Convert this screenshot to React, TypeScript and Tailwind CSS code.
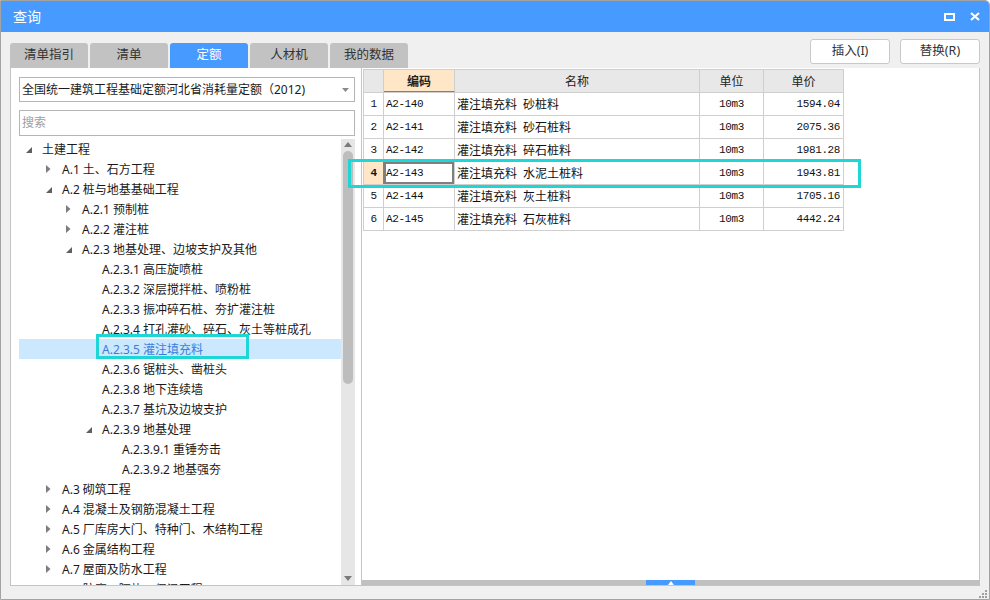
import React from 'react';

type Node = { l: number; t: string; e?: 'open' | 'closed'; sel?: boolean };

const tree: Node[] = [
  { l: 0, t: '土建工程', e: 'open' },
  { l: 1, t: 'A.1 土、石方工程', e: 'closed' },
  { l: 1, t: 'A.2 桩与地基基础工程', e: 'open' },
  { l: 2, t: 'A.2.1 预制桩', e: 'closed' },
  { l: 2, t: 'A.2.2 灌注桩', e: 'closed' },
  { l: 2, t: 'A.2.3 地基处理、边坡支护及其他', e: 'open' },
  { l: 3, t: 'A.2.3.1 高压旋喷桩' },
  { l: 3, t: 'A.2.3.2 深层搅拌桩、喷粉桩' },
  { l: 3, t: 'A.2.3.3 振冲碎石桩、夯扩灌注桩' },
  { l: 3, t: 'A.2.3.4 打孔灌砂、碎石、灰土等桩成孔' },
  { l: 3, t: 'A.2.3.5 灌注填充料', sel: true },
  { l: 3, t: 'A.2.3.6 锯桩头、凿桩头' },
  { l: 3, t: 'A.2.3.8 地下连续墙' },
  { l: 3, t: 'A.2.3.7 基坑及边坡支护' },
  { l: 3, t: 'A.2.3.9 地基处理', e: 'open' },
  { l: 4, t: 'A.2.3.9.1 重锤夯击' },
  { l: 4, t: 'A.2.3.9.2 地基强夯' },
  { l: 1, t: 'A.3 砌筑工程', e: 'closed' },
  { l: 1, t: 'A.4 混凝土及钢筋混凝土工程', e: 'closed' },
  { l: 1, t: 'A.5 厂库房大门、特种门、木结构工程', e: 'closed' },
  { l: 1, t: 'A.6 金属结构工程', e: 'closed' },
  { l: 1, t: 'A.7 屋面及防水工程', e: 'closed' },
  { l: 1, t: 'A.8 防腐、隔热、保温工程', e: 'closed' },
];

const indent = ['pl-[7px]', 'pl-[27px]', 'pl-[47px]', 'pl-[67px]', 'pl-[87px]'];

const rows = [
  ['1', 'A2-140', '灌注填充料', '砂桩料', '10m3', '1594.04'],
  ['2', 'A2-141', '灌注填充料', '砂石桩料', '10m3', '2075.36'],
  ['3', 'A2-142', '灌注填充料', '碎石桩料', '10m3', '1981.28'],
  ['4', 'A2-143', '灌注填充料', '水泥土桩料', '10m3', '1943.81'],
  ['5', 'A2-144', '灌注填充料', '灰土桩料', '10m3', '1705.16'],
  ['6', 'A2-145', '灌注填充料', '石灰桩料', '10m3', '4442.24'],
];

const tabs = ['清单指引', '清单', '定额', '人材机', '我的数据'];

const mono = "font-['Liberation_Mono','Noto_Sans_CJK_SC',monospace] text-[11px] tracking-[-0.4px]";
const cjk = "font-['Noto_Sans_CJK_SC',sans-serif] text-[12px]";

function Toggle({ e }: { e?: 'open' | 'closed' }) {
  if (e === 'open') {
    return (
      <svg width="6" height="6" viewBox="0 0 6 6" className="mt-[2px]">
        <polygon points="6,0 6,6 0,6" fill="#606060" />
      </svg>
    );
  }
  if (e === 'closed') {
    return (
      <svg width="5" height="8" viewBox="0 0 5 8">
        <polygon points="0,0 4.5,4 0,8" fill="#7d7d7d" />
      </svg>
    );
  }
  return null;
}

function TreeRow({ n }: { n: Node }) {
  return (
    <div
      className={`flex h-[20px] items-center ${indent[n.l]} ${n.sel ? 'bg-[#cce8ff] text-[#3a7ddc]' : 'text-[#1a1a1a]'}`}
    >
      <div className="flex w-[16px] shrink-0 items-center">
        <Toggle e={n.e} />
      </div>
      <span className="whitespace-nowrap pt-[1px] leading-[20px]">{n.t}</span>
    </div>
  );
}

export default function App() {
  return (
    <div className="flex h-[600px] w-[990px] flex-col overflow-hidden rounded-tr-[5px] border border-[#a3a3a3] bg-[#f0f0f0] font-['Noto_Sans','Noto_Sans_CJK_SC',sans-serif] text-[12px]">
      {/* title bar */}
      <div className="flex h-[31px] shrink-0 items-center justify-between bg-[#479aff] pl-[12px] pr-[9px] text-white">
        <span className="text-[14px]">查询</span>
        <div className="flex items-center gap-[15px]">
          <div className="h-[8px] w-[11px] border-2 border-white" />
          <svg width="10" height="9" viewBox="0 0 10 9">
            <path d="M1 1 L9 8 M9 1 L1 8" stroke="white" strokeWidth="2.2" />
          </svg>
        </div>
      </div>

      <div className="flex flex-1 flex-col px-[9px]">
        {/* tabs + buttons */}
        <div className="flex h-[36px] shrink-0 items-start justify-between">
          <div className="mt-[11px] flex gap-[2px]">
            {tabs.map((t) => (
              <div
                key={t}
                className={`flex h-[25px] w-[78px] items-center justify-center rounded-t-[3px] text-[12.5px] ${t === '定额' ? 'bg-[#479aff] text-white' : 'bg-[#c2c2c2] text-[#333]'}`}
              >
                {t}
              </div>
            ))}
          </div>
          <div className="mt-[7px] flex gap-[10px]">
            {['插入(I)', '替换(R)'].map((b) => (
              <button
                key={b}
                className="flex h-[25px] w-[80px] items-center justify-center rounded-[3px] border border-[#c9c9c9] bg-white text-[12.5px] text-[#333]"
              >
                {b}
              </button>
            ))}
          </div>
        </div>

        {/* main */}
        <div className="relative flex h-[518px] shrink-0">
          {/* left panel */}
          <div className="flex w-[352px] shrink-0 flex-col border-x border-b border-[#c4c4c4] bg-white pl-[8px] pr-[6px] pt-[9px]">
            <div className="flex h-[25px] items-center justify-between border border-[#b5b5b5] pl-[2px] pr-[5px] text-[#1a1a1a]">
              <span className="whitespace-nowrap">全国统一建筑工程基础定额河北省消耗量定额（2012)</span>
              <svg width="7" height="4" viewBox="0 0 7 4">
                <polygon points="0,0 7,0 3.5,4" fill="#8a8a8a" />
              </svg>
            </div>
            <div className="mt-[8px] flex h-[26px] items-center border border-[#b5b5b5] pl-[2px] text-[#a0a0a0]">
              搜索
            </div>
            <div className="mt-[3px] flex min-h-0 flex-1 overflow-hidden">
              <div className="flex-1 overflow-hidden">
                {tree.map((n) => (
                  <TreeRow key={n.t} n={n} />
                ))}
              </div>
              <div className="flex w-[14px] shrink-0 flex-col items-center bg-[#e6e6e6]">
                <svg width="8" height="5" viewBox="0 0 8 5" className="mt-[3px]">
                  <polygon points="0,5 8,5 4,0" fill="#7a7a7a" />
                </svg>
                <div className="mt-[4px] h-[233px] w-[10px] rounded-full bg-[#bdbdbd]" />
                <div className="flex-1" />
                <svg width="8" height="5" viewBox="0 0 8 5" className="mb-[4px]">
                  <polygon points="0,0 8,0 4,5" fill="#7a7a7a" />
                </svg>
              </div>
            </div>
          </div>

          {/* right panel */}
          <div className="flex flex-1 flex-col border-b border-r border-[#c4c4c4] bg-white">
            <div className="ml-[1px] mt-[1px] w-[481px] border-l border-t border-[#cfcfcf]">
              <div className="flex h-[23px] border-b border-[#cfcfcf] bg-[#e8e8e8] text-[#222]">
                <div className="w-[20px] border-r border-[#cfcfcf]" />
                <div className="flex w-[71px] items-center justify-center border-b border-r border-b-[#3d8ee8] border-r-[#cfcfcf] bg-[#fee6c6] font-bold">
                  <span className={cjk}>编码</span>
                </div>
                <div className={`flex w-[245px] items-center justify-center border-r border-[#cfcfcf] ${cjk}`}>名称</div>
                <div className={`flex w-[64px] items-center justify-center border-r border-[#cfcfcf] ${cjk}`}>单位</div>
                <div className={`flex w-[80px] items-center justify-center border-r border-[#cfcfcf] ${cjk}`}>单价</div>
              </div>
              {rows.map((r) => {
                const active = r[0] === '4';
                return (
                  <div key={r[0]} className="flex h-[23px] border-b border-[#cfcfcf] text-[#111]">
                    <div
                      className={`flex w-[20px] items-center justify-center border-r ${mono} ${active ? 'border-[#3d8ee8] bg-[#fee6c6] font-bold' : 'border-[#cfcfcf]'}`}
                    >
                      {r[0]}
                    </div>
                    <div
                      className={`flex w-[71px] items-center border-r border-[#cfcfcf] pl-[2px] ${mono} ${active ? 'shadow-[inset_0_0_0_2px_#7f7f7f]' : ''}`}
                    >
                      {r[1]}
                    </div>
                    <div className={`flex w-[245px] items-center border-r border-[#cfcfcf] pl-[2px] ${cjk}`}>
                      <span>{r[2]}</span>
                      <span className="ml-[6px]">{r[3]}</span>
                    </div>
                    <div className={`flex w-[64px] items-center justify-center border-r border-[#cfcfcf] ${mono}`}>{r[4]}</div>
                    <div className={`flex w-[80px] items-center justify-end border-r border-[#cfcfcf] pr-[3px] ${mono}`}>{r[5]}</div>
                  </div>
                );
              })}
            </div>
            <div className="flex-1" />
            <div className="flex h-[5px] shrink-0 bg-[#c0c0c0]">
              <div className="ml-[284px] flex h-[5px] w-[49px] items-center justify-center bg-[#479aff]">
                <svg width="6" height="4" viewBox="0 0 6 4">
                  <polygon points="0,4 6,4 3,0" fill="white" />
                </svg>
              </div>
            </div>
          </div>

          {/* annotation boxes */}
          <div className="absolute left-[86px] top-[266px] h-[25px] w-[153px] border-[3px] border-[#1fd6d6]" />
          <div className="absolute left-[338px] top-[91px] h-[29px] w-[513px] border-[3px] border-[#1fd6d6]" />
        </div>

        {/* bottom strip */}
        <div className="flex flex-1 items-end justify-end">
          <div className="mb-[1px] mr-[-7px] grid grid-cols-3 gap-[1px]">
            <span className="h-[2px] w-[2px]" />
            <span className="h-[2px] w-[2px]" />
            <span className="h-[2px] w-[2px] bg-[#a0a0a0]" />
            <span className="h-[2px] w-[2px]" />
            <span className="h-[2px] w-[2px] bg-[#a0a0a0]" />
            <span className="h-[2px] w-[2px] bg-[#a0a0a0]" />
            <span className="h-[2px] w-[2px] bg-[#a0a0a0]" />
            <span className="h-[2px] w-[2px] bg-[#a0a0a0]" />
            <span className="h-[2px] w-[2px] bg-[#a0a0a0]" />
          </div>
        </div>
      </div>
    </div>
  );
}
